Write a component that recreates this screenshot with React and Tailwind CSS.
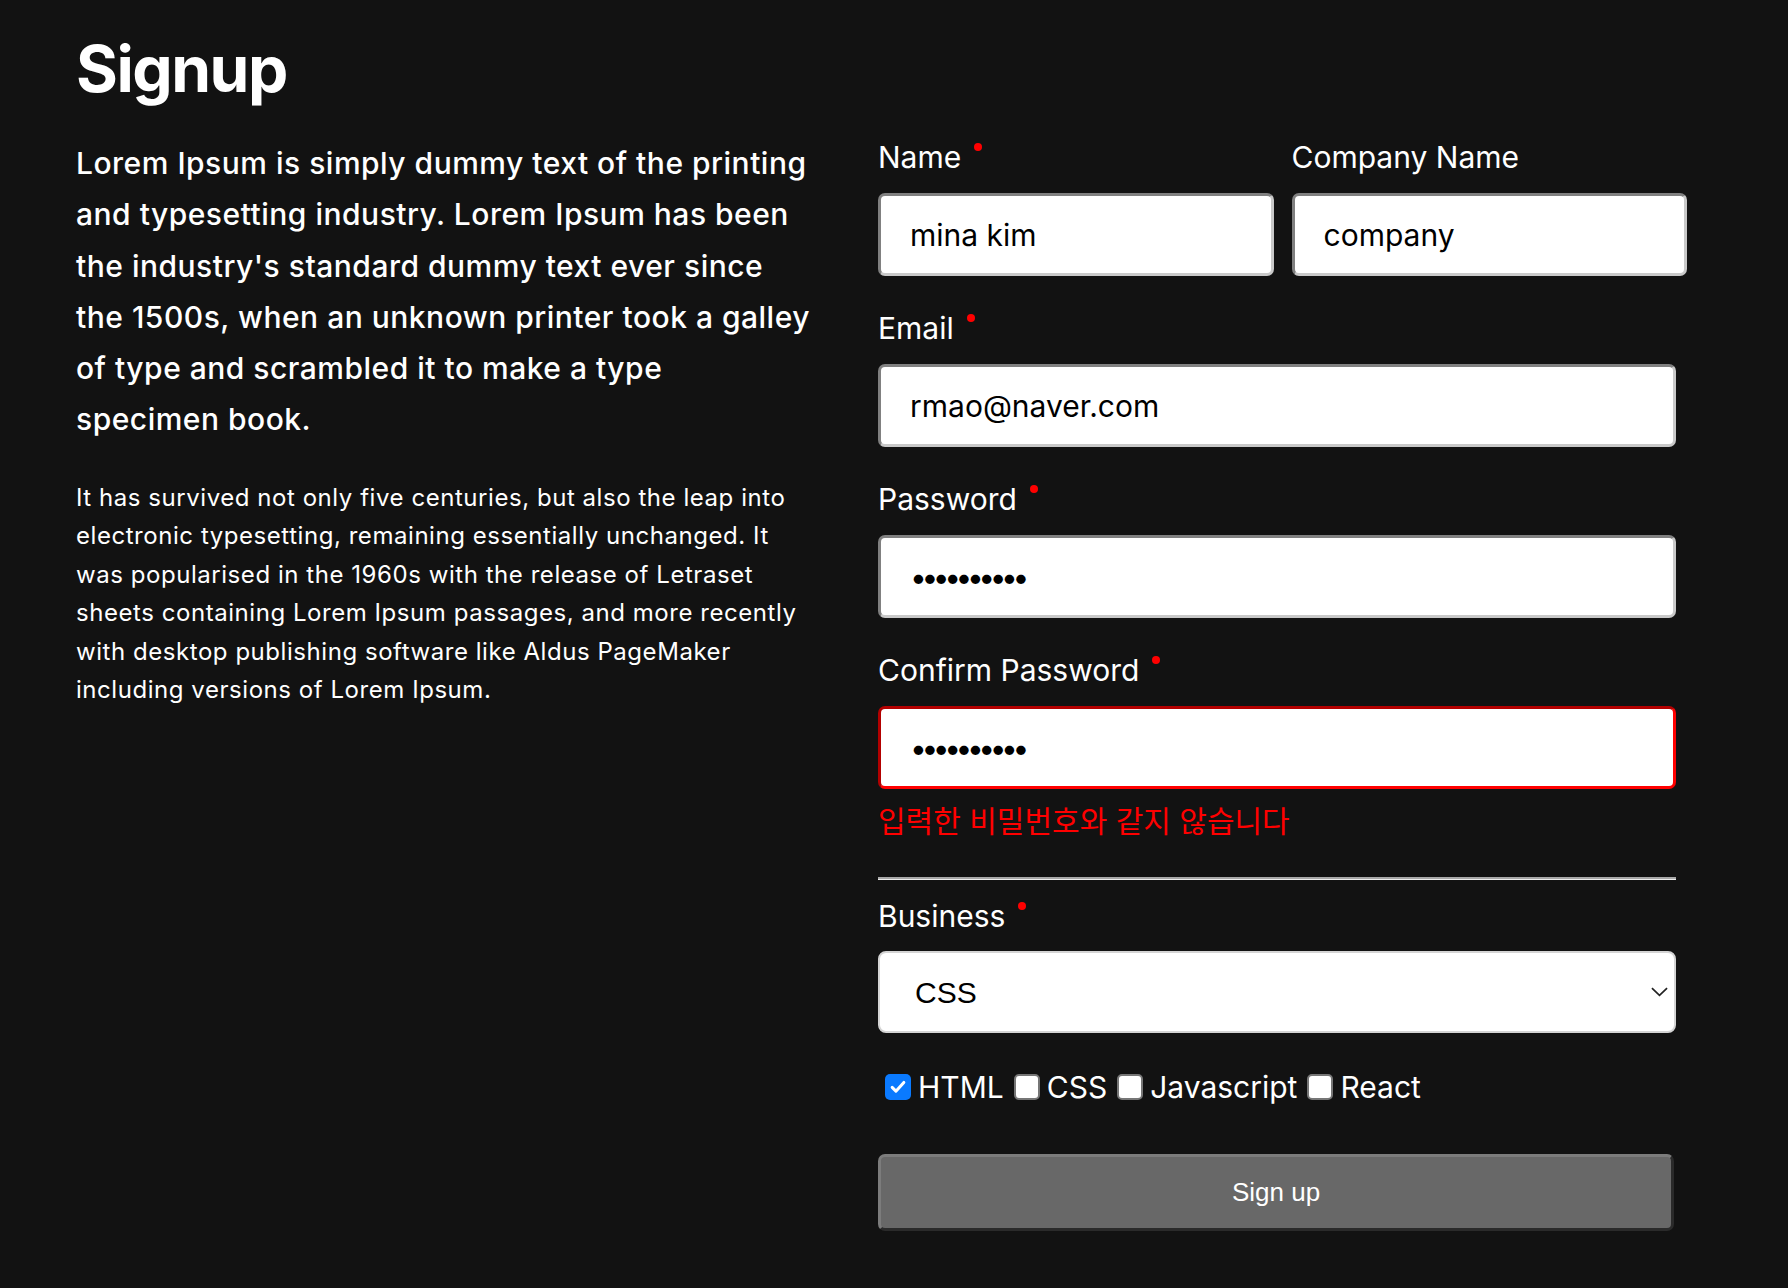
import { useState } from "react";

const sans = "font-['Inter','Noto_Sans_CJK_KR',sans-serif]";

function Label({ children, required }) {
  return (
    <div className="flex items-start text-[30px] leading-[38px] text-white">
      <span>{children}</span>
      {required && <span className="ml-[13px] mt-[5px] h-[8px] w-[8px] rounded-full bg-[#ff0000]" />}
    </div>
  );
}

const inputBase =
  "h-[83px] w-full rounded-[7px] border-[3px] bg-white px-[29px] text-[30px] text-black outline-none";
const inputGray = "border-t-[#808080] border-l-[#808080] border-b-[#c9c9c9] border-r-[#c9c9c9]";
const inputRed = "border-t-[#b30000] border-l-[#b30000] border-b-[#ff0000] border-r-[#ff0000]";

function Check({ checked, label, first }) {
  return (
    <label className={`flex items-center ${first ? "" : "ml-[10px]"}`}>
      {checked ? (
        <span className="flex h-[26px] w-[26px] items-center justify-center rounded-[5px] bg-[#0a7aff]">
          <svg viewBox="0 0 24 24" className="h-[20px] w-[20px]" fill="none" stroke="white" strokeWidth="3.6" strokeLinecap="round" strokeLinejoin="round">
            <path d="M5 12.5l4.5 4.5L19 6.5" />
          </svg>
        </span>
      ) : (
        <span className="h-[26px] w-[26px] rounded-[5px] border-2 border-[#767676] bg-white" />
      )}
      <span className="ml-[7px]">{label}</span>
    </label>
  );
}

export default function App() {
  const [business, setBusiness] = useState("CSS");

  return (
    <div className={`min-h-screen bg-[#121212] px-[76px] pt-[37px] pb-[50px] text-white ${sans}`}>
      <h1 className="text-[64px] font-bold leading-none tracking-[-1.5px]">Signup</h1>

      <div className="mt-[37px] flex gap-[67px]">
        <div className="w-[735px] shrink-0">
          <p className="text-[30px] font-medium leading-[51.3px] tracking-[0.5px]">
            Lorem Ipsum is simply dummy text of the printing and typesetting industry. Lorem Ipsum
            has been the industry's standard dummy text ever since the 1500s, when an unknown printer
            took a galley of type and scrambled it to make a type specimen book.
          </p>
          <p className="mt-[33px] text-[24px] leading-[38.5px] tracking-[0.55px]">
            It has survived not only five centuries, but also the leap into electronic typesetting,
            remaining essentially unchanged. It was popularised in the 1960s with the release of
            Letraset sheets containing Lorem Ipsum passages, and more recently with desktop
            publishing software like Aldus PageMaker including versions of Lorem Ipsum.
          </p>
        </div>

        <form className="w-[809px]" onSubmit={(e) => e.preventDefault()}>
          <div className="grid grid-cols-2 gap-x-[18px]">
            <div>
              <Label required>Name</Label>
              <input className={`mt-[17px] ${inputBase} ${inputGray}`} defaultValue="mina kim" />
            </div>
            <div>
              <Label>Company Name</Label>
              <input className={`mt-[17px] ${inputBase} ${inputGray}`} defaultValue="company" />
            </div>
          </div>

          <div className="mt-[33px] w-[798px]">
            <Label required>Email</Label>
            <input className={`mt-[17px] ${inputBase} ${inputGray}`} defaultValue="rmao@naver.com" />

            <div className="mt-[33px]">
              <Label required>Password</Label>
              <input
                type="password"
                className={`mt-[17px] ${inputBase} ${inputGray} tracking-[-5.5px]`}
                defaultValue="1234567890"
              />
            </div>

            <div className="mt-[33px]">
              <Label required>Confirm Password</Label>
              <input
                type="password"
                className={`mt-[17px] ${inputBase} ${inputRed} tracking-[-5.5px]`}
                defaultValue="1234567891"
              />
              <p className="mt-[13px] text-[30px] leading-[38px] text-[#ff0000]">입력한 비밀번호와 같지 않습니다</p>
            </div>

            <div className="mt-[37px] border-t-2 border-b border-t-[#a8a8a8] border-b-[#ececec]" />

            <div className="mt-[17px]">
              <Label required>Business</Label>
              <div className="relative mt-[16px]">
                <select
                  value={business}
                  onChange={(e) => setBusiness(e.target.value)}
                  className="h-[82px] w-full appearance-none rounded-[8px] border-2 border-[#d4d4d4] bg-white pl-[35px] font-['Liberation_Sans',Arial,sans-serif] text-[30px] text-black outline-none"
                >
                  <option>HTML</option>
                  <option>CSS</option>
                  <option>Javascript</option>
                  <option>React</option>
                </select>
                <svg
                  viewBox="0 0 18 10"
                  className="pointer-events-none absolute right-[8px] top-1/2 h-[10px] w-[17px] -translate-y-1/2"
                  fill="none"
                  stroke="#222"
                  strokeWidth="1.8"
                >
                  <path d="M1 1l8 7.5L17 1" />
                </svg>
              </div>
            </div>

            <div className="mt-[35px] flex h-[38px] items-center pl-[7px] text-[30px] text-white">
              <Check checked label="HTML" first />
              <Check label="CSS" />
              <Check label="Javascript" />
              <Check label="React" />
            </div>

            <button
              type="submit"
              className="mt-[48px] h-[77px] w-[796px] rounded-[7px] border-[3px] border-t-[#7c7c7c] border-l-[#7c7c7c] border-b-[#2a2a2a] border-r-[#2a2a2a] bg-[#686868] font-['Liberation_Sans',Arial,sans-serif] text-[26px] text-white"
            >
              Sign up
            </button>
          </div>
        </form>
      </div>
    </div>
  );
}
